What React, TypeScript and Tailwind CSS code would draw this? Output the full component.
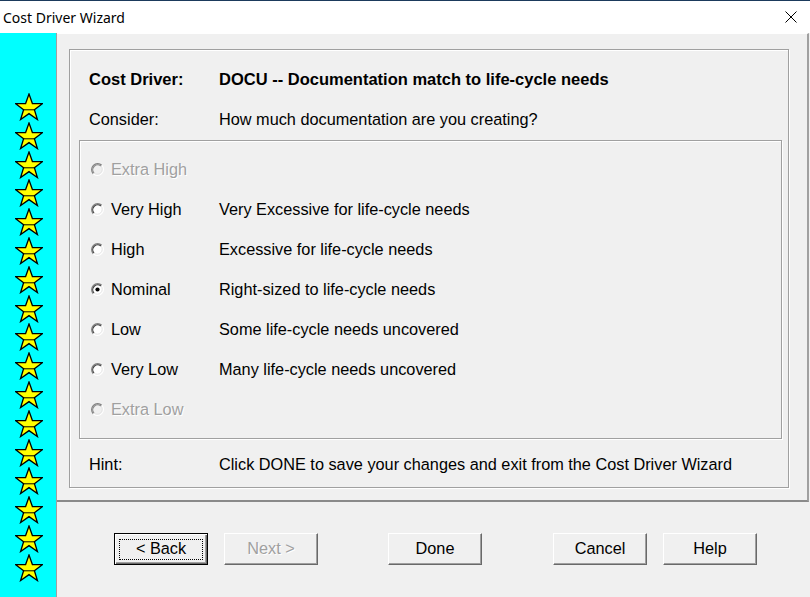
const font = { fontFamily: '"Liberation Sans", Arial, sans-serif' };

function Star() {
  return (
    <svg width="28" height="28" viewBox="0 0 28 28" className="block">
      <polygon
        points="14,1 17.4,10.5 27.3,10.7 19.4,16.8 22.4,26.5 14,20.6 5.6,26.5 8.6,16.8 0.7,10.7 10.6,10.5"
        fill="#ffff00"
        stroke="#000"
        strokeWidth="1.3"
        strokeLinejoin="miter"
      />
      <line x1="8.6" y1="16.8" x2="19.4" y2="16.8" stroke="#000" strokeWidth="1" />
    </svg>
  );
}

function Radio({ checked, disabled }: { checked?: boolean; disabled?: boolean }) {
  return (
    <svg width="13" height="13" viewBox="0 0 13 13" className="block shrink-0">
      <circle cx="6.5" cy="6.5" r="5.5" fill={disabled ? "#f0f0f0" : "#fff"} />
      <path d="M2.26 10.74 A6 6 0 0 1 10.74 2.26" fill="none" stroke="#808080" strokeWidth="1.2" />
      <path d="M10.74 2.26 A6 6 0 0 1 2.26 10.74" fill="none" stroke="#ffffff" strokeWidth="1.2" />
      <path d="M3.04 9.96 A4.9 4.9 0 0 1 9.96 3.04" fill="none" stroke={disabled ? "#8a8a8a" : "#404040"} strokeWidth="1.2" />
      <path d="M9.96 3.04 A4.9 4.9 0 0 1 3.04 9.96" fill="none" stroke="#e3e3e3" strokeWidth="1" />
      {checked && <circle cx="6.5" cy="6.5" r="2.1" fill="#000" />}
    </svg>
  );
}

const options = [
  { label: "Extra High", desc: "", disabled: true },
  { label: "Very High", desc: "Very Excessive for life-cycle needs" },
  { label: "High", desc: "Excessive for life-cycle needs" },
  { label: "Nominal", desc: "Right-sized to life-cycle needs", checked: true },
  { label: "Low", desc: "Some life-cycle needs uncovered" },
  { label: "Very Low", desc: "Many life-cycle needs uncovered" },
  { label: "Extra Low", desc: "", disabled: true },
];

function Button({ label, disabled, className = "" }: { label: string; disabled?: boolean; className?: string }) {
  return (
    <div
      className={`w-[94px] h-[32px] flex items-center justify-center pb-[2px] bg-[#f0f0f0] border border-t-white border-l-white border-r-[#696969] border-b-[#696969] shadow-[inset_-1px_-1px_0_#a0a0a0] text-[16.3px] ${
        disabled ? "text-[#a0a0a0] [text-shadow:1px_1px_0_#fff]" : "text-black"
      } ${className}`}
    >
      {label}
    </div>
  );
}

export default function App() {
  return (
    <div className="w-[810px] h-[597px] bg-[#f0f0f0] flex flex-col overflow-hidden" style={font}>
      {/* Title bar */}
      <div className="h-[33px] shrink-0 bg-white border-t border-[#1b3a5c] flex items-center justify-between pl-[3px] pr-[13px]">
        <span className="text-[14px] text-black" style={{ fontFamily: '"Noto Sans", "Open Sans", sans-serif' }}>
          Cost Driver Wizard
        </span>
        <svg width="12" height="12" viewBox="0 0 12 12">
          <path d="M0.5 0.5 L11.5 11.5 M11.5 0.5 L0.5 11.5" stroke="#000" strokeWidth="1" />
        </svg>
      </div>

      <div className="flex flex-1 min-h-0">
        {/* Star strip */}
        <div className="w-[57px] shrink-0 bg-[#00ffff] border-r border-[#a0a0a0] flex flex-col items-center pt-[60px] pl-[1px]">
          {Array.from({ length: 17 }).map((_, i) => (
            <div key={i} className="h-[28.8px] flex items-start justify-center">
              <Star />
            </div>
          ))}
        </div>

        <div className="flex-1 flex flex-col">
          {/* Top section */}
          <div className="h-[469px] w-[752px] border-t border-white border-r-2 border-b-2 border-r-[#a0a0a0] border-b-[#8a8a8a] pl-[12px] pt-[15px]">
            <div className="w-[720px] h-[439px] border border-[#a0a0a0] shadow-[inset_1px_1px_0_#fff,1px_1px_0_#fff] flex flex-col pt-[19px]">
              <div className="flex h-[20px] items-center pl-[19px] text-[16.5px] font-bold text-black">
                <span className="w-[130px]">Cost Driver:</span>
                <span>DOCU -- Documentation match to life-cycle needs</span>
              </div>
              <div className="flex h-[20px] items-center pl-[19px] mt-[20px] text-[16.3px] text-black">
                <span className="w-[130px]">Consider:</span>
                <span>How much documentation are you creating?</span>
              </div>

              <div className="ml-[9px] mt-[11px] w-[703px] h-[299px] border border-[#a0a0a0] shadow-[inset_1px_1px_0_#fff,1px_1px_0_#fff] pt-[8px] pl-[11px]">
                {options.map((o) => (
                  <div key={o.label} className="h-[40px] flex items-center text-[16.3px]">
                    <Radio checked={o.checked} disabled={o.disabled} />
                    <span
                      className={`ml-[7px] w-[108px] ${
                        o.disabled ? "text-[#a0a0a0] [text-shadow:1px_1px_0_#fff]" : "text-black"
                      }`}
                    >
                      {o.label}
                    </span>
                    <span className="text-black">{o.desc}</span>
                  </div>
                ))}
              </div>

              <div className="flex h-[20px] items-center pl-[19px] mt-[15px] text-[16.3px] text-black">
                <span className="w-[130px]">Hint:</span>
                <span>Click DONE to save your changes and exit from the Cost Driver Wizard</span>
              </div>
            </div>
          </div>

          {/* Buttons */}
          <div className="flex items-start pt-[31px] pl-[57px]">
            <div className="w-[94px] h-[32px] border border-black flex items-center justify-center bg-[#f0f0f0] shadow-[inset_1px_1px_0_#fff,inset_-1px_-1px_0_#696969,inset_-2px_-2px_0_#a0a0a0]">
              <div className="w-[84px] h-[21px] border border-dotted border-black flex items-center justify-center pb-[1px] text-[16.3px] text-black">
                &lt; Back
              </div>
            </div>
            <Button label="Next >" disabled className="ml-[16px]" />
            <Button label="Done" className="ml-[70px]" />
            <Button label="Cancel" className="ml-[71px]" />
            <Button label="Help" className="ml-[16px]" />
          </div>
        </div>
      </div>
    </div>
  );
}
